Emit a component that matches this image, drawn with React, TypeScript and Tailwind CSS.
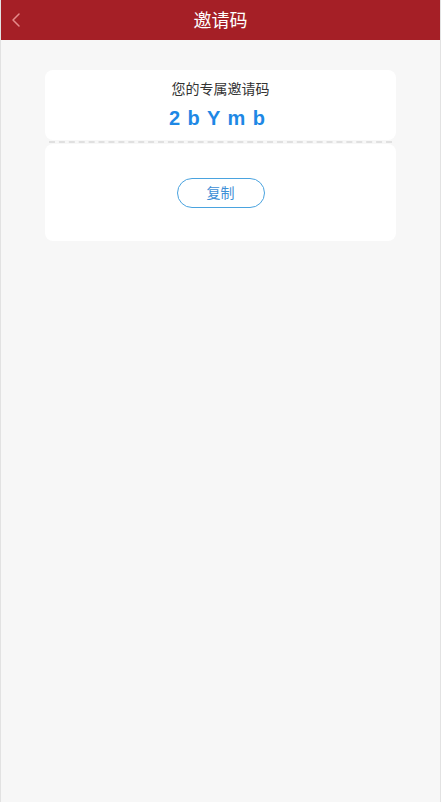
import { ChevronLeft } from "lucide-react";

export default function App() {
  return (
    <div
      className="min-h-[802px] border-x border-[#e2e2e2] bg-[#f7f7f7]"
      style={{ fontFamily: '"Noto Sans", "Noto Sans CJK SC", sans-serif' }}
    >
      {/* HEADER */}
      <div className="relative h-10 flex items-center justify-center bg-[#a51f26]">
        <ChevronLeft className="absolute left-[3px] top-[8px] w-6 h-6 text-[#e58b8b]" strokeWidth={1.5} />
        <div className="text-lg text-white">邀请码</div>
      </div>

      {/* CARD */}
      <div className="mx-11 mt-[30px]">
        <div className="h-[70px] rounded-lg bg-white flex flex-col items-center pt-[9px]">
          <div className="text-sm leading-5 text-[#333]">您的专属邀请码</div>
          <div
            className="mt-[7px] text-xl leading-6 font-bold tracking-[1px] text-[#1e88e5] pr-[6px]"
            style={{ fontFamily: '"Liberation Sans", Arial, sans-serif' }}
          >
            2 b Y m b
          </div>
        </div>
        <div className="mx-1 mt-px border-t-2 border-dashed border-[#e0e0e0]" />
        <div className="mt-px h-[97px] rounded-lg bg-white flex items-center justify-center">
          <button className="w-[88px] h-[30px] rounded-full border border-[#4aa3df] text-sm text-[#3d8fd6]">
            复制
          </button>
        </div>
      </div>
    </div>
  );
}
